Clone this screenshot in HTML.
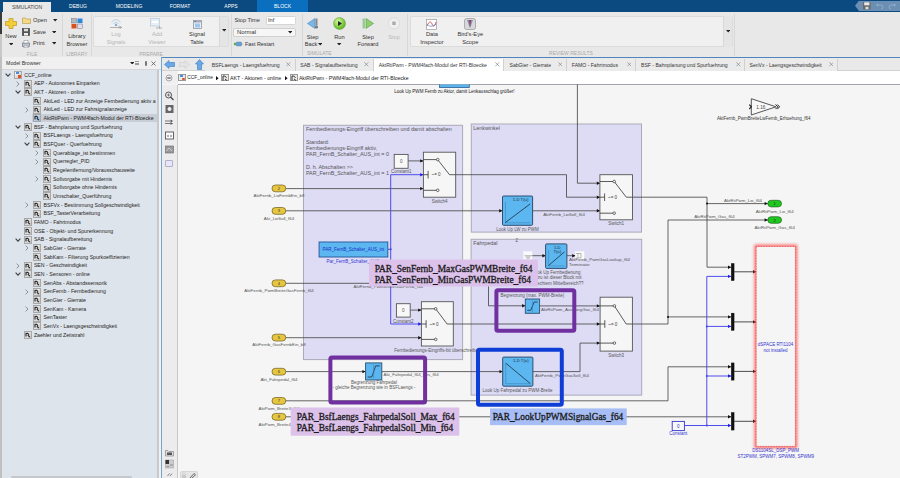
<!DOCTYPE html>
<html><head><meta charset="utf-8">
<style>
*{margin:0;padding:0;box-sizing:border-box}
html,body{width:900px;height:478px;overflow:hidden;background:#f5f5f5;font-family:"Liberation Sans",sans-serif;color:#222}
.a{position:absolute}
.t{position:absolute;white-space:nowrap;line-height:1}
.tr{position:absolute;font-size:5.2px;color:#1e1e1e;white-space:nowrap;line-height:1}
</style></head><body>
<div class="a" style="left:0px;top:0px;width:900.00px;height:12.00px;background:#0b4a80"></div>
<div class="a" style="left:3px;top:1.5px;width:48.00px;height:10.50px;background:#e9e9e9"></div>
<div class="t" style="left:-3.00px;top:4.50px;width:60px;text-align:center;font-size:5.0px;color:#444;">SIMULATION</div>
<div class="t" style="left:48.00px;top:4.05px;width:60px;text-align:center;font-size:5.0px;color:#fff;">DEBUG</div>
<div class="t" style="left:99.00px;top:4.05px;width:60px;text-align:center;font-size:5.0px;color:#fff;">MODELING</div>
<div class="t" style="left:150.00px;top:4.05px;width:60px;text-align:center;font-size:5.0px;color:#fff;">FORMAT</div>
<div class="t" style="left:201.00px;top:4.05px;width:60px;text-align:center;font-size:5.0px;color:#fff;">APPS</div>
<div class="a" style="left:257px;top:0px;width:51.00px;height:12.00px;background:#0a6fbf"></div>
<div class="t" style="left:252.50px;top:4.05px;width:60px;text-align:center;font-size:5.0px;color:#fff;">BLOCK</div>
<div class="a" style="left:855px;top:0.5px;width:45.00px;height:10.50px;background:#6b8fb3;clip-path:polygon(4px 0,100% 0,100% 100%,4px 100%,0 50%)"></div>
<svg class="a" style="left:863px;top:2px" width="8" height="8"><rect x="0" y="0" width="7.6" height="7.4" fill="#6a6a6a"/><rect x="1.2" y="0.3" width="5.2" height="3" fill="#e8e8e8"/><rect x="2.5" y="4.8" width="3" height="2.4" fill="#ddd"/></svg>
<svg class="a" style="left:876px;top:3px" width="8" height="6"><path d="M1.5 2 H5 A2 2 0 0 1 5 6" stroke="#98b2cc" stroke-width="0.8" fill="none"/><path d="M0 2 L2 0.5 V3.5Z" fill="#98b2cc"/></svg>
<svg class="a" style="left:888px;top:3px" width="8" height="6"><path d="M6.5 2 H3 A2 2 0 0 0 3 6" stroke="#98b2cc" stroke-width="0.8" fill="none"/><path d="M8 2 L6 0.5 V3.5Z" fill="#98b2cc"/></svg>
<div class="a" style="left:0px;top:12px;width:900.00px;height:45.00px;background:#e8e8e8"></div>
<div class="a" style="left:0px;top:12px;width:2.00px;height:22.00px;background:#3a3a3a"></div>
<div class="a" style="left:0px;top:34px;width:2.00px;height:23.00px;background:#c8c8c8"></div>
<svg class="a" style="left:5px;top:18px" width="12" height="11"><path d="M4 0.5 H8 V3.5 H11.5 V7.5 H8 V10.5 H4 V7.5 H0.5 V3.5 H4Z" fill="#f3cc3a" stroke="#c09a18" stroke-width="0.7"/></svg>
<div class="t" style="left:-19.00px;top:34.43px;width:60px;text-align:center;font-size:5.7px;color:#333;">New</div>
<svg class="a" style="left:9.1px;top:42.6px" width="4.4" height="2.6"><path d="M0 0 L4.4 0 L2.2 2.6Z" fill="#222"/></svg>
<svg class="a" style="left:22px;top:17px" width="9" height="7"><path d="M0.5 1 H3.5 L4.5 2 H8.5 V6.5 H0.5Z" fill="#f2d98a" stroke="#b49640" stroke-width="0.6"/></svg>
<svg class="a" style="left:22px;top:28px" width="8" height="8"><rect x="0.5" y="0.5" width="7" height="7" fill="#555" stroke="#333" stroke-width="0.6"/><rect x="2" y="0.8" width="4" height="2.5" fill="#ddd"/><rect x="2" y="5" width="4" height="2.5" fill="#eee"/></svg>
<svg class="a" style="left:22px;top:39.5px" width="8" height="8"><rect x="0.5" y="3" width="7" height="3.5" fill="#bcc6d0" stroke="#667" stroke-width="0.6"/><rect x="2" y="0.5" width="4" height="2.5" fill="#fff" stroke="#889" stroke-width="0.5"/><rect x="2" y="6" width="4" height="1.8" fill="#fff" stroke="#889" stroke-width="0.5"/></svg>
<div class="t" style="left:33.00px;top:18.33px;font-size:5.7px;color:#333;">Open</div>
<div class="t" style="left:33.00px;top:29.73px;font-size:5.7px;color:#333;">Save</div>
<div class="t" style="left:33.00px;top:41.33px;font-size:5.7px;color:#333;">Print</div>
<svg class="a" style="left:53.4px;top:19.2px" width="4.4" height="2.6"><path d="M0 0 L4.4 0 L2.2 2.6Z" fill="#222"/></svg>
<svg class="a" style="left:51.7px;top:30.6px" width="4.4" height="2.6"><path d="M0 0 L4.4 0 L2.2 2.6Z" fill="#222"/></svg>
<svg class="a" style="left:51.7px;top:42.2px" width="4.4" height="2.6"><path d="M0 0 L4.4 0 L2.2 2.6Z" fill="#222"/></svg>
<div class="t" style="left:2.00px;top:51.50px;width:60px;text-align:center;font-size:5.0px;color:#a8a8a8;">FILE</div>
<div class="a" style="left:62px;top:14px;width:1.00px;height:42.00px;background:#d8d8d8"></div>
<svg class="a" style="left:71px;top:18px" width="12" height="11"><rect x="0.5" y="0.5" width="5" height="4.5" fill="#b0b8c0" stroke="#778" stroke-width="0.5"/><rect x="6.5" y="0.5" width="5" height="4.5" fill="#2a8ad8"/><rect x="0.5" y="6" width="5" height="4.5" fill="#d85020"/><rect x="6.5" y="6" width="5" height="4.5" fill="#dde" stroke="#778" stroke-width="0.5"/></svg>
<div class="t" style="left:46.90px;top:34.43px;width:60px;text-align:center;font-size:5.7px;color:#333;">Library</div>
<div class="t" style="left:46.90px;top:41.73px;width:60px;text-align:center;font-size:5.7px;color:#333;">Browser</div>
<div class="t" style="left:46.90px;top:51.50px;width:60px;text-align:center;font-size:5.0px;color:#a8a8a8;">LIBRARY</div>
<div class="a" style="left:91px;top:14px;width:1.00px;height:42.00px;background:#d8d8d8"></div>
<div class="a" style="left:93px;top:15.8px;width:136.00px;height:31.30px;background:#f0f0f0;border:1px solid #dcdcdc;border-radius:2px"></div>
<div class="a" style="left:219.4px;top:16.5px;width:9.00px;height:29.90px;background:#e5e5e5;border-left:1px solid #d8d8d8"></div>
<svg class="a" style="left:221.6px;top:29.2px" width="4.4" height="2.6"><path d="M0 0 L4.4 0 L2.2 2.6Z" fill="#222"/></svg>
<svg class="a" style="left:109px;top:18px" width="14" height="11"><path d="M2.5 4.5 A5 5 0 0 1 11.5 4.5 M4.5 6 A2.8 2.8 0 0 1 9.5 6" stroke="#a6c6e6" stroke-width="0.8" fill="none"/><circle cx="7" cy="7" r="1.2" fill="#7aaedc"/><path d="M1 9.5 H13 M10 7.5 V10.5 M11 8 L12.5 9.5 L11 10.5" stroke="#999" stroke-width="0.7" fill="none"/></svg>
<div class="t" style="left:86.00px;top:32.43px;width:60px;text-align:center;font-size:5.7px;color:#b4b4b4;">Log</div>
<div class="t" style="left:86.00px;top:40.23px;width:60px;text-align:center;font-size:5.7px;color:#b4b4b4;">Signals</div>
<svg class="a" style="left:150px;top:18px" width="13" height="11"><rect x="0.5" y="0.5" width="9" height="7.5" fill="#e6eef6" stroke="#b8c8d8" stroke-width="0.7"/><rect x="2" y="3" width="6" height="2" fill="#fff"/><path d="M6 10 H12 M9.5 8 V10.5" stroke="#999" stroke-width="0.7"/></svg>
<div class="t" style="left:127.00px;top:32.43px;width:60px;text-align:center;font-size:5.7px;color:#b4b4b4;">Add</div>
<div class="t" style="left:127.00px;top:40.23px;width:60px;text-align:center;font-size:5.7px;color:#b4b4b4;">Viewer</div>
<svg class="a" style="left:193px;top:20px" width="9" height="9"><rect x="0.5" y="0.5" width="8" height="8" fill="#e8eef6" stroke="#8a8a8a" stroke-width="0.7"/><rect x="0.5" y="0.5" width="8" height="2" fill="#aab"/><rect x="1.5" y="1" width="1.2" height="1" fill="#2a6ad0"/><rect x="2" y="3.5" width="5" height="4" fill="#9cc8f0"/></svg>
<div class="t" style="left:167.00px;top:32.43px;width:60px;text-align:center;font-size:5.7px;color:#333;">Signal</div>
<div class="t" style="left:167.00px;top:40.23px;width:60px;text-align:center;font-size:5.7px;color:#333;">Table</div>
<div class="t" style="left:121.00px;top:51.50px;width:60px;text-align:center;font-size:5.0px;color:#a8a8a8;">PREPARE</div>
<div class="a" style="left:231px;top:14px;width:1.00px;height:42.00px;background:#d8d8d8"></div>
<div class="t" style="left:234.40px;top:18.33px;font-size:5.7px;color:#333;">Stop Time</div>
<div class="a" style="left:265.5px;top:15.5px;width:30.50px;height:9.00px;background:#fff;border:1px solid #d6d6d6;border-radius:1.5px"></div>
<div class="t" style="left:268.00px;top:18.03px;font-size:5.7px;color:#333;">Inf</div>
<div class="a" style="left:233px;top:27.5px;width:63.00px;height:9.50px;background:#f6f6f6;border:1px solid #d0d0d0;border-radius:2px"></div>
<div class="t" style="left:237.00px;top:30.06px;font-size:5.9px;color:#333;">Normal</div>
<svg class="a" style="left:288.1px;top:31.0px" width="4.4" height="2.6"><path d="M0 0 L4.4 0 L2.2 2.6Z" fill="#222"/></svg>
<svg class="a" style="left:234px;top:41px" width="10" height="6"><rect x="0" y="1.8" width="2.5" height="2.4" fill="#5a5"/><path d="M2.5 1 H7 A2.5 2.5 0 0 1 7 5 H2.5Z" fill="#6a9fd0" stroke="#4a7fb0" stroke-width="0.4"/></svg>
<div class="t" style="left:245.00px;top:41.95px;font-size:5.4px;color:#333;">Fast Restart</div>
<div class="a" style="left:302px;top:14px;width:1.00px;height:42.00px;background:#d8d8d8"></div>
<svg class="a" style="left:307px;top:18px" width="12" height="11"><path d="M8 0.5 V10.5 L0.5 5.5Z" fill="#7ab8e8" stroke="#4a88c0" stroke-width="0.6"/><rect x="8.5" y="0.5" width="2" height="7" fill="#888"/><circle cx="9.5" cy="9" r="1.6" fill="#777"/></svg>
<div class="t" style="left:282.70px;top:34.53px;width:60px;text-align:center;font-size:5.7px;color:#333;">Step</div>
<div class="t" style="left:281.00px;top:42.13px;width:60px;text-align:center;font-size:5.7px;color:#333;">Back</div>
<svg class="a" style="left:317.8px;top:43.0px" width="4.4" height="2.6"><path d="M0 0 L4.4 0 L2.2 2.6Z" fill="#222"/></svg>
<svg class="a" style="left:333px;top:17px" width="13" height="13"><defs><radialGradient id="rg" cx="40%" cy="35%" r="65%"><stop offset="0" stop-color="#d6ff9a"/><stop offset="1" stop-color="#58b020"/></radialGradient></defs><circle cx="6.5" cy="6.5" r="6" fill="url(#rg)" stroke="#6aa040" stroke-width="0.5"/><path d="M5 4 L9 6.5 L5 9Z" fill="#222"/></svg>
<div class="t" style="left:309.40px;top:34.53px;width:60px;text-align:center;font-size:5.7px;color:#333;">Run</div>
<svg class="a" style="left:337.2px;top:42.8px" width="4.4" height="2.6"><path d="M0 0 L4.4 0 L2.2 2.6Z" fill="#222"/></svg>
<svg class="a" style="left:362px;top:18px" width="12" height="11"><rect x="0.5" y="0.5" width="2.5" height="10" fill="#9c9"/><path d="M4 0.5 V10.5 L11.5 5.5Z" fill="#8ed070" stroke="#5a9a40" stroke-width="0.6"/></svg>
<div class="t" style="left:338.00px;top:34.53px;width:60px;text-align:center;font-size:5.7px;color:#333;">Step</div>
<div class="t" style="left:338.00px;top:42.13px;width:60px;text-align:center;font-size:5.7px;color:#333;">Forward</div>
<svg class="a" style="left:388px;top:17px" width="13" height="13"><circle cx="6" cy="6.3" r="5.6" fill="#efefef" stroke="#d4d4d4" stroke-width="0.7"/><rect x="4.3" y="4.6" width="3.4" height="3.4" fill="#aaa"/></svg>
<div class="t" style="left:364.00px;top:34.53px;width:60px;text-align:center;font-size:5.7px;color:#b8b8b8;">Stop</div>
<div class="t" style="left:289.30px;top:51.40px;width:60px;text-align:center;font-size:5.0px;color:#a8a8a8;">SIMULATE</div>
<div class="a" style="left:407px;top:14px;width:1.00px;height:42.00px;background:#d8d8d8"></div>
<div class="a" style="left:409.6px;top:15.7px;width:323.40px;height:31.60px;background:#f0f0f0;border:1px solid #dcdcdc;border-radius:2px"></div>
<div class="a" style="left:723px;top:16.4px;width:9.30px;height:30.20px;background:#e5e5e5;border-left:1px solid #d8d8d8"></div>
<svg class="a" style="left:725.5px;top:30.2px" width="4.4" height="2.6"><path d="M0 0 L4.4 0 L2.2 2.6Z" fill="#222"/></svg>
<svg class="a" style="left:426px;top:19px" width="11" height="11"><rect x="0.5" y="0.5" width="10" height="10" fill="#fff" stroke="#9a9a9a" stroke-width="0.7"/><path d="M1 7 C3 2, 5 2, 6 5 S 9 8, 10 3" stroke="#d04040" stroke-width="0.8" fill="none"/><path d="M1 5 C3 8, 6 8, 10 5" stroke="#4a80d0" stroke-width="0.7" fill="none"/></svg>
<div class="t" style="left:401.90px;top:32.23px;width:60px;text-align:center;font-size:5.7px;color:#333;">Data</div>
<div class="t" style="left:401.90px;top:40.13px;width:60px;text-align:center;font-size:5.7px;color:#333;">Inspector</div>
<svg class="a" style="left:464px;top:18px" width="12" height="12"><rect x="0.5" y="0.5" width="11" height="11" rx="2" fill="#d8d8d8" stroke="#888" stroke-width="0.6"/><path d="M3 2 L6 10 L9 2" fill="#5aa0e0"/><path d="M4.8 2 L6 10 L7.2 2Z" fill="#d83030"/></svg>
<div class="t" style="left:440.30px;top:32.23px;width:60px;text-align:center;font-size:5.7px;color:#333;">Bird's-Eye</div>
<div class="t" style="left:440.30px;top:40.13px;width:60px;text-align:center;font-size:5.7px;color:#333;">Scope</div>
<div class="t" style="left:531.00px;top:51.40px;width:80px;text-align:center;font-size:5.0px;color:#a8a8a8;">REVIEW RESULTS</div>
<div class="a" style="left:734px;top:14px;width:1.00px;height:42.00px;background:#d8d8d8"></div>
<div class="a" style="left:0px;top:57px;width:161.00px;height:421.00px;background:#dee4eb"></div>
<div class="a" style="left:0px;top:57px;width:161.00px;height:13.00px;background:#f0f0f0;border-bottom:1px solid #d6d6d6"></div>
<div class="a" style="left:0px;top:57px;width:2.00px;height:421.00px;background:#c0c0c0"></div>
<div class="t" style="left:6.10px;top:61.22px;font-size:5.2px;color:#333;">Model Browser</div>
<svg class="a" style="left:129.6px;top:61.7px" width="4.4" height="2.6"><path d="M0 0 L4.4 0 L2.2 2.6Z" fill="#222"/></svg>
<div class="a" style="left:134.5px;top:61.3px;width:4.50px;height:3.70px;border-top:1px solid #999;border-bottom:1px solid #999"></div>
<div class="a" style="left:134.5px;top:63px;width:4.50px;height:1.00px;background:#999"></div>
<div class="a" style="left:145.3px;top:60.5px;width:1.70px;height:5.00px;background:#777;border-radius:1px"></div>
<svg class="a" style="left:151px;top:60.5px" width="5" height="5"><path d="M0.5 0.5 L4.5 4.5 M4.5 0.5 L0.5 4.5" stroke="#555" stroke-width="0.8"/></svg>
<div class="a" style="left:157px;top:70px;width:1.50px;height:408.00px;background:#c6cacf"></div>
<div class="a" style="left:158.5px;top:70px;width:2.50px;height:408.00px;background:#f0f2f4"></div>
<div class="a" style="left:10.8px;top:475.5px;width:120.80px;height:2.50px;background:#c4c8cc;border-radius:1px"></div>
<div style="position:absolute;left:0;top:0;width:157px;height:478px;overflow:hidden">
<svg class="a" style="left:5.0px;top:72.8px" width="6" height="4"><path d="M0.6 0.6 L3 3.2 L5.4 0.6" stroke="#444" stroke-width="1.1" fill="none"/></svg>
<div class="a" style="left:14.0px;top:70.8px;width:8px;height:8px;border:0.8px solid #a8a8a8;background:linear-gradient(135deg,#fafafa,#c4c4c4)"></div>
<div class="a" style="left:15.5px;top:72.3px;width:3px;height:2px;background:#4a90d8"></div>
<div class="a" style="left:18.0px;top:74.8px;width:3px;height:3px;background:#e05020"></div>
<div class="tr" style="left:24.3px;top:72.6px">CCF_online</div>
<svg class="a" style="left:15.6px;top:80.5px" width="4" height="6"><path d="M0.6 0.6 L3 3 L0.6 5.4" stroke="#888" stroke-width="0.9" fill="none"/></svg>
<div class="a" style="left:23.6px;top:79.5px;width:8px;height:8px;border:0.8px solid #a8a8a8;background:linear-gradient(135deg,#fafafa,#c4c4c4)"></div>
<svg class="a" style="left:23.6px;top:79.5px" width="8" height="8"><path d="M2 5.5 V2.3 H3.6 L5 3.7 M3.8 4.2 L5.8 6.2" stroke="#1a1a1a" stroke-width="1.1" fill="none"/></svg>
<div class="tr" style="left:33.9px;top:81.3px">AEP - Autonomes Einparken</div>
<svg class="a" style="left:14.6px;top:90.1px" width="6" height="4"><path d="M0.6 0.6 L3 3.2 L5.4 0.6" stroke="#444" stroke-width="1.1" fill="none"/></svg>
<div class="a" style="left:23.6px;top:88.1px;width:8px;height:8px;border:0.8px solid #a8a8a8;background:linear-gradient(135deg,#fafafa,#c4c4c4)"></div>
<svg class="a" style="left:23.6px;top:88.1px" width="8" height="8"><path d="M2 5.5 V2.3 H3.6 L5 3.7 M3.8 4.2 L5.8 6.2" stroke="#1a1a1a" stroke-width="1.1" fill="none"/></svg>
<div class="tr" style="left:33.9px;top:89.9px">AKT - Aktoren - online</div>
<div class="a" style="left:33.2px;top:96.8px;width:8px;height:8px;border:0.8px solid #a8a8a8;background:linear-gradient(135deg,#fafafa,#c4c4c4)"></div>
<svg class="a" style="left:33.2px;top:96.8px" width="8" height="8"><path d="M2 5.5 V2.3 H3.6 L5 3.7 M3.8 4.2 L5.8 6.2" stroke="#1a1a1a" stroke-width="1.1" fill="none"/></svg>
<div class="tr" style="left:43.5px;top:98.6px">AktLed - LED zur Anzeige Fernbedienung aktiv a</div>
<svg class="a" style="left:25.2px;top:106.5px" width="4" height="6"><path d="M0.6 0.6 L3 3 L0.6 5.4" stroke="#888" stroke-width="0.9" fill="none"/></svg>
<div class="a" style="left:33.2px;top:105.5px;width:8px;height:8px;border:0.8px solid #a8a8a8;background:linear-gradient(135deg,#fafafa,#c4c4c4)"></div>
<svg class="a" style="left:33.2px;top:105.5px" width="8" height="8"><path d="M2 5.5 V2.3 H3.6 L5 3.7 M3.8 4.2 L5.8 6.2" stroke="#1a1a1a" stroke-width="1.1" fill="none"/></svg>
<div class="tr" style="left:43.5px;top:107.3px">AktLed - LED zur Fahrsignalanzeige</div>
<div class="a" style="left:31.7px;top:113.6px;width:126px;height:8.8px;background:#c9ced6"></div>
<div class="a" style="left:33.2px;top:114.2px;width:8px;height:8px;border:0.8px solid #a8a8a8;background:linear-gradient(135deg,#d8e8f8,#90b8e0)"></div>
<svg class="a" style="left:33.2px;top:114.2px" width="8" height="8"><path d="M2 5.5 V2.3 H3.6 L5 3.7 M3.8 4.2 L5.8 6.2" stroke="#1a1a1a" stroke-width="1.1" fill="none"/></svg>
<div class="tr" style="left:43.5px;top:116.0px">AktRtiPwm - PWM4fach-Modul der RTI-Bloecke</div>
<svg class="a" style="left:14.6px;top:124.8px" width="6" height="4"><path d="M0.6 0.6 L3 3.2 L5.4 0.6" stroke="#444" stroke-width="1.1" fill="none"/></svg>
<div class="a" style="left:23.6px;top:122.8px;width:8px;height:8px;border:0.8px solid #a8a8a8;background:linear-gradient(135deg,#fafafa,#c4c4c4)"></div>
<svg class="a" style="left:23.6px;top:122.8px" width="8" height="8"><path d="M2 5.5 V2.3 H3.6 L5 3.7 M3.8 4.2 L5.8 6.2" stroke="#1a1a1a" stroke-width="1.1" fill="none"/></svg>
<div class="tr" style="left:33.9px;top:124.6px">BSF - Bahnplanung und Spurfuehrung</div>
<svg class="a" style="left:25.2px;top:132.5px" width="4" height="6"><path d="M0.6 0.6 L3 3 L0.6 5.4" stroke="#888" stroke-width="0.9" fill="none"/></svg>
<div class="a" style="left:33.2px;top:131.5px;width:8px;height:8px;border:0.8px solid #a8a8a8;background:linear-gradient(135deg,#fafafa,#c4c4c4)"></div>
<svg class="a" style="left:33.2px;top:131.5px" width="8" height="8"><path d="M2 5.5 V2.3 H3.6 L5 3.7 M3.8 4.2 L5.8 6.2" stroke="#1a1a1a" stroke-width="1.1" fill="none"/></svg>
<div class="tr" style="left:43.5px;top:133.3px">BSFLaengs - Laengsfuehrung</div>
<svg class="a" style="left:24.2px;top:142.2px" width="6" height="4"><path d="M0.6 0.6 L3 3.2 L5.4 0.6" stroke="#444" stroke-width="1.1" fill="none"/></svg>
<div class="a" style="left:33.2px;top:140.2px;width:8px;height:8px;border:0.8px solid #a8a8a8;background:linear-gradient(135deg,#fafafa,#c4c4c4)"></div>
<svg class="a" style="left:33.2px;top:140.2px" width="8" height="8"><path d="M2 5.5 V2.3 H3.6 L5 3.7 M3.8 4.2 L5.8 6.2" stroke="#1a1a1a" stroke-width="1.1" fill="none"/></svg>
<div class="tr" style="left:43.5px;top:142.0px">BSFQuer - Querfuehrung</div>
<svg class="a" style="left:34.8px;top:149.8px" width="4" height="6"><path d="M0.6 0.6 L3 3 L0.6 5.4" stroke="#888" stroke-width="0.9" fill="none"/></svg>
<div class="a" style="left:42.8px;top:148.8px;width:8px;height:8px;border:0.8px solid #a8a8a8;background:linear-gradient(135deg,#fafafa,#c4c4c4)"></div>
<svg class="a" style="left:42.8px;top:148.8px" width="8" height="8"><path d="M2 5.5 V2.3 H3.6 L5 3.7 M3.8 4.2 L5.8 6.2" stroke="#1a1a1a" stroke-width="1.1" fill="none"/></svg>
<div class="tr" style="left:53.1px;top:150.6px">Querablage_ist bestimmen</div>
<svg class="a" style="left:34.8px;top:158.5px" width="4" height="6"><path d="M0.6 0.6 L3 3 L0.6 5.4" stroke="#888" stroke-width="0.9" fill="none"/></svg>
<div class="a" style="left:42.8px;top:157.5px;width:8px;height:8px;border:0.8px solid #a8a8a8;background:linear-gradient(135deg,#fafafa,#c4c4c4)"></div>
<svg class="a" style="left:42.8px;top:157.5px" width="8" height="8"><path d="M2 5.5 V2.3 H3.6 L5 3.7 M3.8 4.2 L5.8 6.2" stroke="#1a1a1a" stroke-width="1.1" fill="none"/></svg>
<div class="tr" style="left:53.1px;top:159.3px">Querregler_PID</div>
<div class="a" style="left:42.8px;top:166.2px;width:8px;height:8px;border:0.8px solid #a8a8a8;background:linear-gradient(135deg,#fafafa,#c4c4c4)"></div>
<svg class="a" style="left:42.8px;top:166.2px" width="8" height="8"><path d="M2 5.5 V2.3 H3.6 L5 3.7 M3.8 4.2 L5.8 6.2" stroke="#1a1a1a" stroke-width="1.1" fill="none"/></svg>
<div class="tr" style="left:53.1px;top:168.0px">Regelentfernung/Vorausschauweite</div>
<svg class="a" style="left:34.8px;top:175.8px" width="4" height="6"><path d="M0.6 0.6 L3 3 L0.6 5.4" stroke="#888" stroke-width="0.9" fill="none"/></svg>
<div class="a" style="left:42.8px;top:174.8px;width:8px;height:8px;border:0.8px solid #a8a8a8;background:linear-gradient(135deg,#fafafa,#c4c4c4)"></div>
<svg class="a" style="left:42.8px;top:174.8px" width="8" height="8"><path d="M2 5.5 V2.3 H3.6 L5 3.7 M3.8 4.2 L5.8 6.2" stroke="#1a1a1a" stroke-width="1.1" fill="none"/></svg>
<div class="tr" style="left:53.1px;top:176.6px">Sollvorgabe mit Hindernis</div>
<div class="a" style="left:42.8px;top:183.5px;width:8px;height:8px;border:0.8px solid #a8a8a8;background:linear-gradient(135deg,#fafafa,#c4c4c4)"></div>
<svg class="a" style="left:42.8px;top:183.5px" width="8" height="8"><path d="M2 5.5 V2.3 H3.6 L5 3.7 M3.8 4.2 L5.8 6.2" stroke="#1a1a1a" stroke-width="1.1" fill="none"/></svg>
<div class="tr" style="left:53.1px;top:185.3px">Sollvorgabe ohne Hindernis</div>
<div class="a" style="left:42.8px;top:192.2px;width:8px;height:8px;border:0.8px solid #a8a8a8;background:linear-gradient(135deg,#fafafa,#c4c4c4)"></div>
<svg class="a" style="left:42.8px;top:192.2px" width="8" height="8"><path d="M2 5.5 V2.3 H3.6 L5 3.7 M3.8 4.2 L5.8 6.2" stroke="#1a1a1a" stroke-width="1.1" fill="none"/></svg>
<div class="tr" style="left:53.1px;top:194.0px">Umschalter_Querführung</div>
<svg class="a" style="left:25.2px;top:201.9px" width="4" height="6"><path d="M0.6 0.6 L3 3 L0.6 5.4" stroke="#888" stroke-width="0.9" fill="none"/></svg>
<div class="a" style="left:33.2px;top:200.9px;width:8px;height:8px;border:0.8px solid #a8a8a8;background:linear-gradient(135deg,#fafafa,#c4c4c4)"></div>
<svg class="a" style="left:33.2px;top:200.9px" width="8" height="8"><path d="M2 5.5 V2.3 H3.6 L5 3.7 M3.8 4.2 L5.8 6.2" stroke="#1a1a1a" stroke-width="1.1" fill="none"/></svg>
<div class="tr" style="left:43.5px;top:202.7px">BSFVx - Bestimmung Sollgeschwindigkeit</div>
<div class="a" style="left:33.2px;top:209.5px;width:8px;height:8px;border:0.8px solid #a8a8a8;background:linear-gradient(135deg,#fafafa,#c4c4c4)"></div>
<svg class="a" style="left:33.2px;top:209.5px" width="8" height="8"><path d="M2 5.5 V2.3 H3.6 L5 3.7 M3.8 4.2 L5.8 6.2" stroke="#1a1a1a" stroke-width="1.1" fill="none"/></svg>
<div class="tr" style="left:43.5px;top:211.3px">BSF_TasterVerarbeitung</div>
<div class="a" style="left:23.6px;top:218.2px;width:8px;height:8px;border:0.8px solid #a8a8a8;background:linear-gradient(135deg,#fafafa,#c4c4c4)"></div>
<svg class="a" style="left:23.6px;top:218.2px" width="8" height="8"><path d="M2 5.5 V2.3 H3.6 L5 3.7 M3.8 4.2 L5.8 6.2" stroke="#1a1a1a" stroke-width="1.1" fill="none"/></svg>
<div class="tr" style="left:33.9px;top:220.0px">FAMO  - Fahrtmodus</div>
<div class="a" style="left:23.6px;top:226.9px;width:8px;height:8px;border:0.8px solid #a8a8a8;background:linear-gradient(135deg,#fafafa,#c4c4c4)"></div>
<svg class="a" style="left:23.6px;top:226.9px" width="8" height="8"><path d="M2 5.5 V2.3 H3.6 L5 3.7 M3.8 4.2 L5.8 6.2" stroke="#1a1a1a" stroke-width="1.1" fill="none"/></svg>
<div class="tr" style="left:33.9px;top:228.7px">OSE - Objekt- und Spurerkennung</div>
<svg class="a" style="left:14.6px;top:237.5px" width="6" height="4"><path d="M0.6 0.6 L3 3.2 L5.4 0.6" stroke="#444" stroke-width="1.1" fill="none"/></svg>
<div class="a" style="left:23.6px;top:235.5px;width:8px;height:8px;border:0.8px solid #a8a8a8;background:linear-gradient(135deg,#fafafa,#c4c4c4)"></div>
<svg class="a" style="left:23.6px;top:235.5px" width="8" height="8"><path d="M2 5.5 V2.3 H3.6 L5 3.7 M3.8 4.2 L5.8 6.2" stroke="#1a1a1a" stroke-width="1.1" fill="none"/></svg>
<div class="tr" style="left:33.9px;top:237.3px">SAB - Signalaufbereitung</div>
<svg class="a" style="left:25.2px;top:245.2px" width="4" height="6"><path d="M0.6 0.6 L3 3 L0.6 5.4" stroke="#888" stroke-width="0.9" fill="none"/></svg>
<div class="a" style="left:33.2px;top:244.2px;width:8px;height:8px;border:0.8px solid #a8a8a8;background:linear-gradient(135deg,#fafafa,#c4c4c4)"></div>
<svg class="a" style="left:33.2px;top:244.2px" width="8" height="8"><path d="M2 5.5 V2.3 H3.6 L5 3.7 M3.8 4.2 L5.8 6.2" stroke="#1a1a1a" stroke-width="1.1" fill="none"/></svg>
<div class="tr" style="left:43.5px;top:246.0px">SabGier - Gierrate</div>
<div class="a" style="left:33.2px;top:252.9px;width:8px;height:8px;border:0.8px solid #a8a8a8;background:linear-gradient(135deg,#fafafa,#c4c4c4)"></div>
<svg class="a" style="left:33.2px;top:252.9px" width="8" height="8"><path d="M2 5.5 V2.3 H3.6 L5 3.7 M3.8 4.2 L5.8 6.2" stroke="#1a1a1a" stroke-width="1.1" fill="none"/></svg>
<div class="tr" style="left:43.5px;top:254.7px">SabKam - Filterung Spurkoeffizienten</div>
<svg class="a" style="left:15.6px;top:262.5px" width="4" height="6"><path d="M0.6 0.6 L3 3 L0.6 5.4" stroke="#888" stroke-width="0.9" fill="none"/></svg>
<div class="a" style="left:23.6px;top:261.5px;width:8px;height:8px;border:0.8px solid #a8a8a8;background:linear-gradient(135deg,#fafafa,#c4c4c4)"></div>
<svg class="a" style="left:23.6px;top:261.5px" width="8" height="8"><path d="M2 5.5 V2.3 H3.6 L5 3.7 M3.8 4.2 L5.8 6.2" stroke="#1a1a1a" stroke-width="1.1" fill="none"/></svg>
<div class="tr" style="left:33.9px;top:263.3px">SEN - Geschwindigkeit</div>
<svg class="a" style="left:14.6px;top:272.2px" width="6" height="4"><path d="M0.6 0.6 L3 3.2 L5.4 0.6" stroke="#444" stroke-width="1.1" fill="none"/></svg>
<div class="a" style="left:23.6px;top:270.2px;width:8px;height:8px;border:0.8px solid #a8a8a8;background:linear-gradient(135deg,#fafafa,#c4c4c4)"></div>
<svg class="a" style="left:23.6px;top:270.2px" width="8" height="8"><path d="M2 5.5 V2.3 H3.6 L5 3.7 M3.8 4.2 L5.8 6.2" stroke="#1a1a1a" stroke-width="1.1" fill="none"/></svg>
<div class="tr" style="left:33.9px;top:272.0px">SEN - Sensoren - online</div>
<div class="a" style="left:33.2px;top:278.9px;width:8px;height:8px;border:0.8px solid #a8a8a8;background:linear-gradient(135deg,#fafafa,#c4c4c4)"></div>
<svg class="a" style="left:33.2px;top:278.9px" width="8" height="8"><path d="M2 5.5 V2.3 H3.6 L5 3.7 M3.8 4.2 L5.8 6.2" stroke="#1a1a1a" stroke-width="1.1" fill="none"/></svg>
<div class="tr" style="left:43.5px;top:280.7px">SenAbs - Abstandssensorik</div>
<svg class="a" style="left:25.2px;top:288.6px" width="4" height="6"><path d="M0.6 0.6 L3 3 L0.6 5.4" stroke="#888" stroke-width="0.9" fill="none"/></svg>
<div class="a" style="left:33.2px;top:287.6px;width:8px;height:8px;border:0.8px solid #a8a8a8;background:linear-gradient(135deg,#fafafa,#c4c4c4)"></div>
<svg class="a" style="left:33.2px;top:287.6px" width="8" height="8"><path d="M2 5.5 V2.3 H3.6 L5 3.7 M3.8 4.2 L5.8 6.2" stroke="#1a1a1a" stroke-width="1.1" fill="none"/></svg>
<div class="tr" style="left:43.5px;top:289.4px">SenFernb - Fernbedienung</div>
<div class="a" style="left:33.2px;top:296.2px;width:8px;height:8px;border:0.8px solid #a8a8a8;background:linear-gradient(135deg,#fafafa,#c4c4c4)"></div>
<svg class="a" style="left:33.2px;top:296.2px" width="8" height="8"><path d="M2 5.5 V2.3 H3.6 L5 3.7 M3.8 4.2 L5.8 6.2" stroke="#1a1a1a" stroke-width="1.1" fill="none"/></svg>
<div class="tr" style="left:43.5px;top:298.0px">SenGier - Gierrate</div>
<svg class="a" style="left:25.2px;top:305.9px" width="4" height="6"><path d="M0.6 0.6 L3 3 L0.6 5.4" stroke="#888" stroke-width="0.9" fill="none"/></svg>
<div class="a" style="left:33.2px;top:304.9px;width:8px;height:8px;border:0.8px solid #a8a8a8;background:linear-gradient(135deg,#fafafa,#c4c4c4)"></div>
<svg class="a" style="left:33.2px;top:304.9px" width="8" height="8"><path d="M2 5.5 V2.3 H3.6 L5 3.7 M3.8 4.2 L5.8 6.2" stroke="#1a1a1a" stroke-width="1.1" fill="none"/></svg>
<div class="tr" style="left:43.5px;top:306.7px">SenKam - Kamera</div>
<div class="a" style="left:33.2px;top:313.6px;width:8px;height:8px;border:0.8px solid #a8a8a8;background:linear-gradient(135deg,#fafafa,#c4c4c4)"></div>
<svg class="a" style="left:33.2px;top:313.6px" width="8" height="8"><path d="M2 5.5 V2.3 H3.6 L5 3.7 M3.8 4.2 L5.8 6.2" stroke="#1a1a1a" stroke-width="1.1" fill="none"/></svg>
<div class="tr" style="left:43.5px;top:315.4px">SenTaster</div>
<div class="a" style="left:33.2px;top:322.2px;width:8px;height:8px;border:0.8px solid #a8a8a8;background:linear-gradient(135deg,#fafafa,#c4c4c4)"></div>
<svg class="a" style="left:33.2px;top:322.2px" width="8" height="8"><path d="M2 5.5 V2.3 H3.6 L5 3.7 M3.8 4.2 L5.8 6.2" stroke="#1a1a1a" stroke-width="1.1" fill="none"/></svg>
<div class="tr" style="left:43.5px;top:324.0px">SenVx - Laengsgeschwindigkeit</div>
<div class="a" style="left:23.6px;top:330.9px;width:8px;height:8px;border:0.8px solid #a8a8a8;background:linear-gradient(135deg,#fafafa,#c4c4c4)"></div>
<svg class="a" style="left:23.6px;top:330.9px" width="8" height="8"><path d="M2 5.5 V2.3 H3.6 L5 3.7 M3.8 4.2 L5.8 6.2" stroke="#1a1a1a" stroke-width="1.1" fill="none"/></svg>
<div class="tr" style="left:33.9px;top:332.7px">Zaehler und Zeitstrahl</div>
</div>
<div class="a" style="left:161px;top:57px;width:739.00px;height:421.00px;background:#f5f5f5"></div>
<div class="a" style="left:161px;top:57px;width:739.00px;height:1.00px;background:#4f86c0"></div>
<div class="a" style="left:160.6px;top:57px;width:1.80px;height:421.00px;background:#74a3d0"></div>
<div class="a" style="left:162px;top:58px;width:738.00px;height:12.50px;background:#e9e9e9;border-bottom:1px solid #d2d2d2"></div>
<svg class="a" style="left:164px;top:59.5px" width="11" height="9"><path d="M0.5 4.5 L5 0.5 V2.5 H10.5 V6.5 H5 V8.5Z" fill="#6aa8e8" stroke="#3a78c0" stroke-width="0.6"/></svg>
<svg class="a" style="left:179px;top:59.5px" width="11" height="9"><path d="M10.5 4.5 L6 0.5 V2.5 H0.5 V6.5 H6 V8.5Z" fill="#e4e4e4" stroke="#cfcfcf" stroke-width="0.6"/></svg>
<svg class="a" style="left:194.5px;top:58.5px" width="9" height="11"><path d="M4.5 0.5 L8.5 5 H6.5 V10.5 H2.5 V5 H0.5Z" fill="#6aa8e8" stroke="#3a78c0" stroke-width="0.6"/></svg>
<div class="a" style="left:204.5px;top:58.5px;width:91.30px;height:12.00px;background:#ebebeb;border-right:1px solid #d0d0d0"></div>
<div class="t" style="left:211.70px;top:63.16px;font-size:5.1px;color:#333;">BSFLaengs - Laengsfuehrung</div>
<svg class="a" style="left:286.2px;top:62.3px" width="4.6" height="4.6"><path d="M0.3 0.3 L4.3 4.3 M4.3 0.3 L0.3 4.3" stroke="#8a8a8a" stroke-width="0.7"/></svg>
<div class="a" style="left:295.8px;top:58.5px;width:77.80px;height:12.00px;background:#ebebeb;border-right:1px solid #d0d0d0"></div>
<div class="t" style="left:300.30px;top:63.16px;font-size:5.1px;color:#333;">SAB - Signalaufbereitung</div>
<svg class="a" style="left:364.4px;top:62.3px" width="4.6" height="4.6"><path d="M0.3 0.3 L4.3 4.3 M4.3 0.3 L0.3 4.3" stroke="#8a8a8a" stroke-width="0.7"/></svg>
<div class="a" style="left:373.6px;top:58.5px;width:130.00px;height:12.50px;background:#ffffff;border-right:1px solid #d0d0d0"></div>
<div class="t" style="left:378.80px;top:63.16px;font-size:5.1px;color:#333;">AktRtiPwm - PWM4fach-Modul der RTI-Bloecke</div>
<svg class="a" style="left:495.0px;top:62.3px" width="4.6" height="4.6"><path d="M0.3 0.3 L4.3 4.3 M4.3 0.3 L0.3 4.3" stroke="#8a8a8a" stroke-width="0.7"/></svg>
<div class="a" style="left:503.6px;top:58.5px;width:63.10px;height:12.00px;background:#ebebeb;border-right:1px solid #d0d0d0"></div>
<div class="t" style="left:509.50px;top:63.16px;font-size:5.1px;color:#333;">SabGier - Gierrate</div>
<svg class="a" style="left:557.7px;top:62.3px" width="4.6" height="4.6"><path d="M0.3 0.3 L4.3 4.3 M4.3 0.3 L0.3 4.3" stroke="#8a8a8a" stroke-width="0.7"/></svg>
<div class="a" style="left:566.7px;top:58.5px;width:69.10px;height:12.00px;background:#ebebeb;border-right:1px solid #d0d0d0"></div>
<div class="t" style="left:571.80px;top:63.16px;font-size:5.1px;color:#333;">FAMO  - Fahrtmodus</div>
<svg class="a" style="left:626.9px;top:62.3px" width="4.6" height="4.6"><path d="M0.3 0.3 L4.3 4.3 M4.3 0.3 L0.3 4.3" stroke="#8a8a8a" stroke-width="0.7"/></svg>
<div class="a" style="left:635.8px;top:58.5px;width:109.20px;height:12.00px;background:#ebebeb;border-right:1px solid #d0d0d0"></div>
<div class="t" style="left:641.00px;top:63.16px;font-size:5.1px;color:#333;">BSF - Bahnplanung und Spurfuehrung</div>
<svg class="a" style="left:736.0px;top:62.3px" width="4.6" height="4.6"><path d="M0.3 0.3 L4.3 4.3 M4.3 0.3 L0.3 4.3" stroke="#8a8a8a" stroke-width="0.7"/></svg>
<div class="a" style="left:745px;top:58.5px;width:92.80px;height:12.00px;background:#ebebeb;border-right:1px solid #d0d0d0"></div>
<div class="t" style="left:749.50px;top:63.16px;font-size:5.1px;color:#333;">SenVx - Laengsgeschwindigkeit</div>
<svg class="a" style="left:828.9px;top:62.3px" width="4.6" height="4.6"><path d="M0.3 0.3 L4.3 4.3 M4.3 0.3 L0.3 4.3" stroke="#8a8a8a" stroke-width="0.7"/></svg>
<div class="a" style="left:162px;top:70.5px;width:15.50px;height:13.50px;background:#efefef"></div>
<div class="a" style="left:177.5px;top:70.5px;width:722.50px;height:14.00px;background:#fff;border-bottom:1px solid #a0a4aa"></div>
<svg class="a" style="left:165px;top:73.5px" width="8" height="8"><circle cx="4" cy="4" r="3" fill="#eee" stroke="#888" stroke-width="0.7"/><rect x="2.3" y="3.4" width="3.4" height="1.2" fill="#555"/></svg>
<div class="a" style="left:164px;top:86.5px;width:11.00px;height:0.50px;background:#ccc"></div>
<div class="a" style="left:178.2px;top:73.8px;width:7.6px;height:7.6px;border:1px solid #999;background:#eaeaea"></div>
<div class="a" style="left:179.7px;top:75.2px;width:3px;height:2px;background:#4a90d8"></div><div class="a" style="left:182.2px;top:77.5px;width:2.6px;height:2.6px;background:#e05020;border-radius:50%"></div>
<div class="t" style="left:187.3px;top:75.95px;font-size:4.85px;color:#222">CCF_online</div>
<svg class="a" style="left:215.5px;top:75.6px" width="3" height="4.4"><path d="M0 0 L2.6 2.2 L0 4.4Z" fill="#111"/></svg>
<div class="a" style="left:221.2px;top:73.8px;width:7.6px;height:7.6px;border:1px solid #999;background:#eaeaea"></div>
<svg class="a" style="left:221.2px;top:73.8px" width="8" height="8"><path d="M2 6.5 V2 H3.8 L5.5 3.8 M4 5 L6 6.5" stroke="#333" stroke-width="1" fill="none"/></svg>
<div class="t" style="left:229.9px;top:75.81px;font-size:5.26px;color:#222">AKT - Aktoren - online</div>
<svg class="a" style="left:284.6px;top:75.6px" width="3" height="4.4"><path d="M0 0 L2.6 2.2 L0 4.4Z" fill="#111"/></svg>
<div class="a" style="left:290.2px;top:73.8px;width:7.6px;height:7.6px;border:1px solid #999;background:#eaeaea"></div>
<svg class="a" style="left:290.2px;top:73.8px" width="8" height="8"><path d="M2 6.5 V2 H3.8 L5.5 3.8 M4 5 L6 6.5" stroke="#333" stroke-width="1" fill="none"/></svg>
<div class="t" style="left:298.9px;top:75.84px;font-size:5.18px;color:#222">AktRtiPwm - PWM4fach-Modul der RTI-Bloecke</div>
<div class="a" style="left:162px;top:84.5px;width:14.50px;height:393.50px;background:#ececec"></div>
<div class="a" style="left:176.5px;top:84.5px;width:1.50px;height:393.50px;background:#c8c8c8"></div>
<svg class="a" style="left:164px;top:90px" width="11" height="70"><circle cx="4.5" cy="5" r="3" fill="none" stroke="#444" stroke-width="0.9"/><path d="M6.5 7 L9.5 10" stroke="#444" stroke-width="1.2"/><path d="M3 5 H6 M4.5 3.5 V6.5" stroke="#444" stroke-width="0.6"/><rect x="1.5" y="15" width="8" height="8" fill="#666"/><path d="M3.5 19 H7.5 M5.5 17 V21" stroke="#eee" stroke-width="1.6"/><rect x="4" y="17.5" width="3" height="3" fill="#eee"/><path d="M1 31 H8 M1 33.5 H8 M6.5 30 L8.5 31 L6.5 32 M6.5 32.5 L8.5 33.5 L6.5 34.5" stroke="#444" stroke-width="0.7" fill="none"/><rect x="1.5" y="42" width="8" height="7" fill="#fafafa" stroke="#555" stroke-width="0.9"/><path d="M3 46 H5 M6 46 H8" stroke="#444" stroke-width="0.8"/><rect x="1.5" y="56" width="8" height="7" fill="#999" stroke="#666" stroke-width="0.6"/><path d="M2.5 61 L5 58 L8 61" stroke="#eee" stroke-width="0.6" fill="none"/></svg>
<div class="a" style="left:165.4px;top:159.6px;width:7.60px;height:7.20px;background:#e8e6fa;border:1px solid #b0b0c8;border-radius:1px"></div>
<svg class="a" style="left:164px;top:448px" width="11" height="30"><path d="M1.5 2.5 H4 L5 3.5 H9.5 V8 H1.5Z" fill="#ddd" stroke="#777" stroke-width="0.6"/><rect x="3" y="4.5" width="5" height="2.5" fill="#555"/><rect x="1.5" y="12" width="8" height="8" fill="#ccc" stroke="#999" stroke-width="0.5"/><rect x="1.5" y="12" width="3.5" height="4" fill="#333"/><path d="M6 17 H9 M2.5 18.5 H5" stroke="#666" stroke-width="0.6"/><path d="M3.5 28 L5.5 25.5 M6 28 L8 25.5" stroke="#555" stroke-width="0.7"/></svg>
<div class="a" style="left:179.6px;top:471.3px;width:18.80px;height:8.70px;background:#e6e6e6;border:1px solid #d6d6d6;border-radius:2px"></div>
<svg class="a" style="left:181px;top:472px" width="16" height="6"><rect x="1" y="3" width="4" height="3" fill="#c8c8c8"/><path d="M1.8 3 V2 A1.2 1.2 0 0 1 4.2 2 V3" stroke="#c8c8c8" stroke-width="0.7" fill="none"/><path d="M9 6 L13 1.5 L14.5 2.8 L10.5 6.5" stroke="#666" stroke-width="1" fill="none"/></svg>
<svg class="a" style="left:0;top:0" width="900" height="478" viewBox="0 0 900 478">
<defs><clipPath id="cv"><rect x="177.5" y="84.5" width="723" height="394"/></clipPath><filter id="glow" x="-20%" y="-5%" width="140%" height="110%"><feGaussianBlur stdDeviation="1.4"/></filter></defs>
<g clip-path="url(#cv)">
<rect x="303.5" y="125.3" width="159.1" height="234.3" fill="#dedcf5" stroke="#a9a9b9" stroke-width="1" rx="0"/>
<rect x="471.3" y="124.0" width="170.2" height="108.1" fill="#dedcf5" stroke="#a9a9b9" stroke-width="1" rx="0"/>
<rect x="471.1" y="239.3" width="170.6" height="155.8" fill="#dedcf5" stroke="#a9a9b9" stroke-width="1" rx="0"/>
<text x="305.9" y="131.1" font-size="5.4" fill="#555" text-anchor="start" font-family="Liberation Sans">Fernbedienungs-Eingriff überschreiben und damit abschalten</text>
<text x="305.9" y="143.5" font-size="5.4" fill="#555" text-anchor="start" font-family="Liberation Sans">Standard:</text>
<text x="305.9" y="150" font-size="5.4" fill="#555" text-anchor="start" font-family="Liberation Sans">Fernbedienungs-Eingriff aktiv,</text>
<text x="305.9" y="156.4" font-size="5.4" fill="#555" text-anchor="start" font-family="Liberation Sans">PAR_FernB_Schalter_AUS_int = 0</text>
<text x="305.9" y="168.9" font-size="5.4" fill="#555" text-anchor="start" font-family="Liberation Sans">D. h. Abschalten &gt;&gt;</text>
<text x="305.9" y="175.4" font-size="5.4" fill="#555" text-anchor="start" font-family="Liberation Sans">PAR_FernB_Schalter_AUS_int = 1</text>
<text x="473.2" y="130.1" font-size="5.4" fill="#555" text-anchor="start" font-family="Liberation Sans">Lenkwinkel</text>
<text x="473.2" y="245.3" font-size="5.4" fill="#555" text-anchor="start" font-family="Liberation Sans">Fahrpedal</text>
<text x="515.5" y="241.5" font-size="4.5" fill="#555" text-anchor="start" font-family="Liberation Sans">2</text>
<rect x="439.5" y="80" width="29.8" height="7.5" fill="#5ab4ee" stroke="#2f5f8f" stroke-width="0.8" rx="0"/>
<text x="454.4" y="93.0" font-size="4.53" fill="#222" text-anchor="middle" font-family="Liberation Sans">Look Up PWM Fernb zu Aktor, damit Lenkausschlag größer!</text>
<path d="M751.3 98.7 L776 106.8 L751.3 115Z" fill="#f8f8f8" stroke="#555" stroke-width="1"/>
<path d="M749.3 104.6 L751.3 106.8 L749.3 109" stroke="#222" stroke-width="1.2" fill="none"/>
<path d="M775.5 104.5 L777.8 106.8 L775.5 109.1 M777.3 104.5 L779.6 106.8 L777.3 109.1" stroke="#222" stroke-width="1" fill="none"/>
<text x="760.8" y="108.5" font-size="4.6" fill="#444" text-anchor="middle" font-family="Liberation Sans">1.16</text>
<text x="763.8" y="120.3" font-size="4.52" fill="#333" text-anchor="middle" font-family="Liberation Sans">AktFernb_PwmBreiteLwFernb_Erhoehung_f64</text>
<path d="M577.4 84.0 L577.4 183.2 L600.0 183.2" stroke="#404040" stroke-width="0.8" fill="none"/>
<path d="M600.0 183.2 L596.8 181.5 L596.8 184.9Z" fill="#111"/>
<path d="M408.1 160.9 L423.4 160.9" stroke="#404040" stroke-width="0.8" fill="none"/>
<path d="M423.4 160.9 L420.2 159.2 L420.2 162.6Z" fill="#111"/>
<path d="M285.8 188.6 L423.4 188.6" stroke="#404040" stroke-width="0.8" fill="none"/>
<path d="M423.4 188.6 L420.2 186.9 L420.2 190.3Z" fill="#111"/>
<path d="M285.8 210.8 L502.4 210.8" stroke="#404040" stroke-width="0.8" fill="none"/>
<path d="M502.4 210.8 L499.2 209.1 L499.2 212.5Z" fill="#111"/>
<path d="M455.7 174.7 L566.5 174.7 L566.5 197.2 L600.0 197.2" stroke="#404040" stroke-width="0.8" fill="none"/>
<path d="M600.0 197.2 L596.8 195.5 L596.8 198.9Z" fill="#111"/>
<path d="M532.6 210.8 L600.0 210.8" stroke="#404040" stroke-width="0.8" fill="none"/>
<path d="M600.0 210.8 L596.8 209.1 L596.8 212.5Z" fill="#111"/>
<path d="M632.5 197.2 L707.0 197.2 L707.0 267.2 L731.2 267.2" stroke="#404040" stroke-width="0.8" fill="none"/>
<path d="M731.2 267.2 L728.0 265.5 L728.0 268.9Z" fill="#111"/>
<path d="M707.0 203.6 L767.8 203.6" stroke="#404040" stroke-width="0.8" fill="none"/>
<path d="M767.8 203.6 L764.6 201.9 L764.6 205.3Z" fill="#111"/>
<path d="M285.8 283.3 L488.5 283.3 L488.5 305.8 L525.3 305.8" stroke="#404040" stroke-width="0.8" fill="none"/>
<path d="M525.3 305.8 L522.1 304.1 L522.1 307.5Z" fill="#111"/>
<path d="M532.0 255.7 L545.6 255.7" stroke="#404040" stroke-width="0.8" fill="none"/>
<path d="M545.6 255.7 L542.4 254.0 L542.4 257.4Z" fill="#111"/>
<path d="M566.9 255.7 L575.4 255.7" stroke="#404040" stroke-width="0.8" fill="none"/>
<path d="M575.4 255.7 L572.2 254.0 L572.2 257.4Z" fill="#111"/>
<path d="M539.6 305.9 L600.0 305.9" stroke="#404040" stroke-width="0.8" fill="none"/>
<path d="M600.0 305.9 L596.8 304.2 L596.8 307.6Z" fill="#111"/>
<path d="M410.2 310.1 L421.4 310.1" stroke="#404040" stroke-width="0.8" fill="none"/>
<path d="M421.4 310.1 L418.2 308.4 L418.2 311.8Z" fill="#111"/>
<path d="M285.8 337.7 L421.4 337.7" stroke="#404040" stroke-width="0.8" fill="none"/>
<path d="M421.4 337.7 L418.2 336.0 L418.2 339.4Z" fill="#111"/>
<path d="M453.3 324.0 L600.0 324.0" stroke="#404040" stroke-width="0.8" fill="none"/>
<path d="M600.0 324.0 L596.8 322.3 L596.8 325.7Z" fill="#111"/>
<path d="M632.4 324.0 L668.0 324.0 L668.0 220.0 L767.8 220.0" stroke="#404040" stroke-width="0.8" fill="none"/>
<path d="M767.8 220.0 L764.6 218.3 L764.6 221.7Z" fill="#111"/>
<path d="M668.0 316.9 L731.2 316.9" stroke="#404040" stroke-width="0.8" fill="none"/>
<path d="M731.2 316.9 L728.0 315.2 L728.0 318.6Z" fill="#111"/>
<path d="M285.8 371.6 L365.6 371.6" stroke="#404040" stroke-width="0.8" fill="none"/>
<path d="M365.6 371.6 L362.4 369.9 L362.4 373.3Z" fill="#111"/>
<path d="M381.8 371.6 L502.7 371.6" stroke="#404040" stroke-width="0.8" fill="none"/>
<path d="M502.7 371.6 L499.5 369.9 L499.5 373.3Z" fill="#111"/>
<path d="M532.9 371.6 L580.0 371.6 L580.0 343.1 L600.0 343.1" stroke="#404040" stroke-width="0.8" fill="none"/>
<path d="M600.0 343.1 L596.8 341.4 L596.8 344.8Z" fill="#111"/>
<path d="M285.8 400.8 L668.0 400.8 L668.0 366.8 L731.2 366.8" stroke="#404040" stroke-width="0.8" fill="none"/>
<path d="M731.2 366.8 L728.0 365.1 L728.0 368.5Z" fill="#111"/>
<path d="M285.8 416.8 L731.2 416.8" stroke="#404040" stroke-width="0.8" fill="none"/>
<path d="M731.2 416.8 L728.0 415.1 L728.0 418.5Z" fill="#111"/>
<path d="M734.1 271.8 L756.2 271.8" stroke="#222" stroke-width="0.8" fill="none"/>
<path d="M756.2 271.8 L753.0 270.1 L753.0 273.5Z" fill="#111"/>
<path d="M734.1 321.9 L756.2 321.9" stroke="#222" stroke-width="0.8" fill="none"/>
<path d="M756.2 321.9 L753.0 320.2 L753.0 323.6Z" fill="#111"/>
<path d="M734.1 371.4 L756.2 371.4" stroke="#222" stroke-width="0.8" fill="none"/>
<path d="M756.2 371.4 L753.0 369.7 L753.0 373.1Z" fill="#111"/>
<path d="M734.1 421.3 L756.2 421.3" stroke="#222" stroke-width="0.8" fill="none"/>
<path d="M756.2 421.3 L753.0 419.6 L753.0 423.0Z" fill="#111"/>
<circle cx="707" cy="203.6" r="1" fill="#111"/>
<circle cx="668" cy="316.9" r="1" fill="#111"/>
<path d="M387.8 249.3 L390.7 249.3" stroke="#4545ee" stroke-width="0.95" fill="none"/>
<path d="M390.7 249.3 L390.7 174.7 L423.4 174.7" stroke="#4545ee" stroke-width="0.95" fill="none"/>
<path d="M423.4 174.7 L420.2 173.0 L420.2 176.4Z" fill="#2020e0"/>
<path d="M390.7 249.3 L390.7 324.0 L421.4 324.0" stroke="#4545ee" stroke-width="0.95" fill="none"/>
<path d="M421.4 324.0 L418.2 322.3 L418.2 325.7Z" fill="#2020e0"/>
<circle cx="390.7" cy="249.3" r="1" fill="#4545ee"/>
<path d="M684.4 425.5 L731.2 425.5" stroke="#4545ee" stroke-width="0.95" fill="none"/>
<path d="M731.2 425.5 L728.0 423.8 L728.0 427.2Z" fill="#2020e0"/>
<path d="M706.8 425.5 L706.8 276.4 L731.2 276.4" stroke="#4545ee" stroke-width="0.95" fill="none"/>
<path d="M731.2 276.4 L728.0 274.7 L728.0 278.1Z" fill="#2020e0"/>
<path d="M706.8 326.4 L731.2 326.4" stroke="#4545ee" stroke-width="0.95" fill="none"/>
<path d="M731.2 326.4 L728.0 324.7 L728.0 328.1Z" fill="#2020e0"/>
<path d="M706.8 376.0 L731.2 376.0" stroke="#4545ee" stroke-width="0.95" fill="none"/>
<path d="M731.2 376.0 L728.0 374.3 L728.0 377.7Z" fill="#2020e0"/>
<circle cx="706.8" cy="326.4" r="1" fill="#4545ee"/>
<circle cx="706.8" cy="376" r="1" fill="#4545ee"/>
<circle cx="706.8" cy="425.5" r="1" fill="#4545ee"/>
<text x="743" y="201.8" font-size="4.4" fill="#555" text-anchor="middle" font-family="Liberation Sans">AktRtiPwm_Lw_f64</text>
<text x="714.4" y="217.8" font-size="4.4" fill="#555" text-anchor="middle" font-family="Liberation Sans">AktRtiPwm_Gas_f64</text>
<text x="564" y="215.5" font-size="4.4" fill="#555" text-anchor="middle" font-family="Liberation Sans">AktFernb_LwSoll_f64</text>
<text x="541" y="311" font-size="4.4" fill="#555" text-anchor="start" font-family="Liberation Sans">AktRtiPwm_AusgangGas_f64</text>
<text x="535" y="376.5" font-size="4.4" fill="#555" text-anchor="start" font-family="Liberation Sans">AktFernb_PwmGasSoll_f64</text>
<text x="383.5" y="376.2" font-size="4.4" fill="#555" text-anchor="start" font-family="Liberation Sans">Akt_Fahrpedal_f64_bes_f64</text>
<text x="388.3" y="288.4" font-size="4.4" fill="#555" text-anchor="middle" font-family="Liberation Sans">AktFernb_PwmBreiteGasFernb_f64</text>
<rect x="423.4" y="152.2" width="32.3" height="45.0" fill="#f6f6f6" stroke="#555" stroke-width="0.9" rx="0"/>
<path d="M423.4 159.6 L437.7 159.6 M437.7 159.6 L449.5 174.7 L455.7 174.7 M423.4 190.29999999999998 L437.7 190.29999999999998 M423.4 174.7 L428.09999999999997 174.7 M428.09999999999997 170.89999999999998 L428.09999999999997 178.5" stroke="#333" stroke-width="0.8" fill="none"/>
<circle cx="437.7" cy="159.6" r="1.3" fill="#f6f6f6" stroke="#333" stroke-width="0.7"/><circle cx="437.7" cy="190.29999999999998" r="1.3" fill="#f6f6f6" stroke="#333" stroke-width="0.7"/>
<text x="431.59999999999997" y="176.29999999999998" font-size="4.5" fill="#444" text-anchor="start" font-family="Liberation Sans">~= 0</text>
<text x="439.54999999999995" y="202.5" font-size="4.5" fill="#555" text-anchor="middle" font-family="Liberation Sans">Switch4</text>
<rect x="599.9" y="174.7" width="32.6" height="45.1" fill="#f6f6f6" stroke="#555" stroke-width="0.9" rx="0"/>
<path d="M599.9 181.5 L614.1999999999999 181.5 M614.1999999999999 181.5 L626.3 197.2 L632.5 197.2 M599.9 213.20000000000002 L614.1999999999999 213.20000000000002 M599.9 197.2 L604.6 197.2 M604.6 193.39999999999998 L604.6 201.0" stroke="#333" stroke-width="0.8" fill="none"/>
<circle cx="614.1999999999999" cy="181.5" r="1.3" fill="#f6f6f6" stroke="#333" stroke-width="0.7"/><circle cx="614.1999999999999" cy="213.20000000000002" r="1.3" fill="#f6f6f6" stroke="#333" stroke-width="0.7"/>
<text x="608.1" y="198.79999999999998" font-size="4.5" fill="#444" text-anchor="start" font-family="Liberation Sans">~= 0</text>
<text x="616.2" y="225.10000000000002" font-size="4.5" fill="#555" text-anchor="middle" font-family="Liberation Sans">Switch1</text>
<rect x="600.1" y="297.2" width="32.3" height="53.9" fill="#f6f6f6" stroke="#555" stroke-width="0.9" rx="0"/>
<path d="M600.1 305.9 L614.4 305.9 M614.4 305.9 L626.1999999999999 324 L632.4 324 M600.1 343.1 L614.4 343.1 M600.1 324 L604.8000000000001 324 M604.8000000000001 320.2 L604.8000000000001 327.8" stroke="#333" stroke-width="0.8" fill="none"/>
<circle cx="614.4" cy="305.9" r="1.3" fill="#f6f6f6" stroke="#333" stroke-width="0.7"/><circle cx="614.4" cy="343.1" r="1.3" fill="#f6f6f6" stroke="#333" stroke-width="0.7"/>
<text x="608.3000000000001" y="325.6" font-size="4.5" fill="#444" text-anchor="start" font-family="Liberation Sans">~= 0</text>
<text x="616.25" y="357.3" font-size="4.5" fill="#555" text-anchor="middle" font-family="Liberation Sans">Switch3</text>
<rect x="421.4" y="301.7" width="31.9" height="44.3" fill="#f6f6f6" stroke="#555" stroke-width="0.9" rx="0"/>
<path d="M421.4 308.8 L435.7 308.8 M435.7 308.8 L447.1 324 L453.3 324 M421.4 339.4 L435.7 339.4 M421.4 324 L426.09999999999997 324 M426.09999999999997 320.2 L426.09999999999997 327.8" stroke="#333" stroke-width="0.8" fill="none"/>
<circle cx="435.7" cy="308.8" r="1.3" fill="#f6f6f6" stroke="#333" stroke-width="0.7"/><circle cx="435.7" cy="339.4" r="1.3" fill="#f6f6f6" stroke="#333" stroke-width="0.7"/>
<text x="429.59999999999997" y="325.6" font-size="4.5" fill="#444" text-anchor="start" font-family="Liberation Sans">~= 0</text>
<text x="437.35" y="352.3" font-size="4.5" fill="#555" text-anchor="middle" font-family="Liberation Sans">Fernbedienungs-Eingriffs-bit überschreiben</text>
<rect x="394.2" y="154.4" width="13.9" height="13.9" fill="#f8f8f8" stroke="#555" stroke-width="0.9" rx="0"/>
<text x="401.15" y="162.95000000000002" font-size="4.5" fill="#555" text-anchor="middle" font-family="Liberation Sans">0</text>
<text x="401.15" y="172.9" font-size="4.5" fill="#555" text-anchor="middle" font-family="Liberation Sans">Constant1</text>
<rect x="396.4" y="303.7" width="13.8" height="13.4" fill="#f8f8f8" stroke="#555" stroke-width="0.9" rx="0"/>
<text x="403.29999999999995" y="312.0" font-size="4.5" fill="#555" text-anchor="middle" font-family="Liberation Sans">0</text>
<text x="403.29999999999995" y="323.1" font-size="4.5" fill="#555" text-anchor="middle" font-family="Liberation Sans">Constant2</text>
<rect x="672.2" y="421.4" width="12.2" height="9.2" fill="#f8f8f8" stroke="#3535d0" stroke-width="0.9" rx="0"/>
<text x="678.3" y="427.6" font-size="4.5" fill="#3535d0" text-anchor="middle" font-family="Liberation Sans">0</text>
<text x="678.3" y="435.20000000000005" font-size="4.5" fill="#3535d0" text-anchor="middle" font-family="Liberation Sans">Constant</text>
<rect x="502.5" y="196" width="30.1" height="29.3" fill="#5cb6ef" stroke="#2d4f70" stroke-width="1" rx="1"/>
<path d="M505.0 222.8 L530.1 204" stroke="#1c2c44" stroke-width="0.8"/>
<path d="M505.5 202 L505.5 222.8 L530.1 222.8" stroke="#3a7ab0" stroke-width="0.5" fill="none"/>
<text x="520.55" y="201" font-size="4.2" fill="#1a2a40" text-anchor="middle" font-family="Liberation Sans">1-D T(u)</text>
<text x="517.5" y="230.6" font-size="4.5" fill="#555" text-anchor="middle" font-family="Liberation Sans">Look Up LW zu PWM</text>
<rect x="545.6" y="243.9" width="21.3" height="24.5" fill="#5cb6ef" stroke="#2d4f70" stroke-width="1" rx="1"/>
<path d="M548.1 265.9 L564.4 251.9" stroke="#1c2c44" stroke-width="0.8"/>
<path d="M548.6 249.9 L548.6 265.9 L564.4 265.9" stroke="#3a7ab0" stroke-width="0.5" fill="none"/>
<text x="557.25" y="248.70000000000002" font-size="4.2" fill="#1a2a40" text-anchor="middle" font-family="Liberation Sans">1-D</text>
<text x="557.25" y="252.9" font-size="4.2" fill="#1a2a40" text-anchor="middle" font-family="Liberation Sans">T(u)</text>
<rect x="502.7" y="357.1" width="30.2" height="29.1" fill="#5cb6ef" stroke="#2d4f70" stroke-width="1" rx="1"/>
<path d="M505.7 363.1 L530.4 383.7" stroke="#1c2c44" stroke-width="0.8"/>
<path d="M505.7 363.1 L505.7 383.7 L530.4 383.7" stroke="#3a7ab0" stroke-width="0.5" fill="none"/>
<text x="520.8" y="362.1" font-size="4.2" fill="#1a2a40" text-anchor="middle" font-family="Liberation Sans">1-D T(u)</text>
<text x="517.5" y="391.5" font-size="4.5" fill="#555" text-anchor="middle" font-family="Liberation Sans">Look Up Fahrpedal zu PWM-Breite</text>
<rect x="523.7" y="251.7" width="8.3" height="7.5" fill="#fbfbfb" stroke="#fbfbfb" stroke-width="0.5" rx="0"/>
<path d="M524.5 255.7 L532 255.7 M525.5 257 L530.5 257 M526.5 258.2 L529.5 258.2" stroke="#888" stroke-width="0.6"/>
<rect x="575.4" y="251.7" width="8.6" height="7.5" fill="#fbfbfb" stroke="#fbfbfb" stroke-width="0.5" rx="0"/>
<path d="M576 253.5 L581 253.5 L581 258 L576 258 M578 253.5 L578 258" stroke="#888" stroke-width="0.6" fill="none"/>
<text x="569" y="261" font-size="4.4" fill="#555" text-anchor="start" font-family="Liberation Sans">AktFernb_PwmGasLookup_f64</text>
<text x="569" y="266.2" font-size="4.4" fill="#555" text-anchor="start" font-family="Liberation Sans">Terminator</text>
<text x="556.3" y="273.9" font-size="4.5" fill="#555" text-anchor="middle" font-family="Liberation Sans">Look Up Fernbedienung</text>
<text x="556.3" y="278.9" font-size="4.5" fill="#555" text-anchor="middle" font-family="Liberation Sans">Wozu ist dieser Block mit</text>
<text x="556.3" y="284.8" font-size="4.5" fill="#555" text-anchor="middle" font-family="Liberation Sans">verrechtem Mittelbereich??</text>
<rect x="525.3" y="299" width="14.3" height="14.3" fill="#5cb6ef" stroke="#2d4f70" stroke-width="0.9" rx="0"/>
<path d="M527.3 310.3 L530.7339999999999 310.3 L534.1659999999999 302 L537.6 302" stroke="#1c2c44" stroke-width="0.8" fill="none"/>
<path d="M532.45 300.5 L532.45 311.8" stroke="#3a7ab0" stroke-width="0.5"/>
<text x="500.5" y="296.6" font-size="4.5" fill="#555" text-anchor="start" font-family="Liberation Sans">Begrenzung (max. PWM-Breite)</text>
<rect x="365.6" y="362.9" width="16.2" height="17.1" fill="#5cb6ef" stroke="#2d4f70" stroke-width="0.9" rx="0"/>
<path d="M367.6 377 L371.75600000000003 377 L375.644 365.9 L379.8 365.9" stroke="#1c2c44" stroke-width="0.8" fill="none"/>
<path d="M373.70000000000005 364.4 L373.70000000000005 378.5" stroke="#3a7ab0" stroke-width="0.5"/>
<text x="374" y="383.8" font-size="4.5" fill="#555" text-anchor="middle" font-family="Liberation Sans">Begrenzung Fahrpedal</text>
<text x="374" y="389.4" font-size="4.5" fill="#555" text-anchor="middle" font-family="Liberation Sans">- gleiche Begrenzung wie in BSFLaengs -</text>
<rect x="319.1" y="242" width="68.7" height="15.0" fill="#5cb6ef" stroke="#2d5ea0" stroke-width="1" rx="0"/>
<text x="353.4" y="251.0" font-size="4.5" fill="#1a30c8" text-anchor="middle" font-family="Liberation Sans">PAR_FernB_Schalter_AUS_int</text>
<text x="356.5" y="263.2" font-size="4.5" fill="#3535d0" text-anchor="middle" font-family="Liberation Sans">Par_FernB_Schalter_AUS_int</text>
<rect x="272" y="185.0" width="13.8" height="6.8" rx="3.4" fill="#e6c640" stroke="#6a5a20" stroke-width="0.7"/>
<text x="278.9" y="189.9" font-size="4.2" fill="#333" text-anchor="middle" font-family="Liberation Sans">2</text>
<text x="279" y="197.20000000000002" font-size="4.4" fill="#555" text-anchor="middle" font-family="Liberation Sans">AktFernb_LwFernbEin_b8</text>
<rect x="272" y="207.5" width="13.8" height="6.8" rx="3.4" fill="#e6c640" stroke="#6a5a20" stroke-width="0.7"/>
<text x="278.9" y="212.4" font-size="4.2" fill="#333" text-anchor="middle" font-family="Liberation Sans">3</text>
<text x="279" y="219.70000000000002" font-size="4.4" fill="#555" text-anchor="middle" font-family="Liberation Sans">Akt_LwSoll_f64</text>
<rect x="272" y="279.9" width="13.8" height="6.8" rx="3.4" fill="#e6c640" stroke="#6a5a20" stroke-width="0.7"/>
<text x="278.9" y="284.8" font-size="4.2" fill="#333" text-anchor="middle" font-family="Liberation Sans">4</text>
<text x="279" y="292.1" font-size="4.4" fill="#555" text-anchor="middle" font-family="Liberation Sans">AktFernb_PwmBreiteGasFernb_f64</text>
<rect x="272" y="334.2" width="13.8" height="6.8" rx="3.4" fill="#e6c640" stroke="#6a5a20" stroke-width="0.7"/>
<text x="278.9" y="339.1" font-size="4.2" fill="#333" text-anchor="middle" font-family="Liberation Sans">5</text>
<text x="279" y="346.40000000000003" font-size="4.4" fill="#555" text-anchor="middle" font-family="Liberation Sans">AktFernb_GasFernbEin_b8</text>
<rect x="272" y="368.3" width="13.8" height="6.8" rx="3.4" fill="#e6c640" stroke="#6a5a20" stroke-width="0.7"/>
<text x="278.9" y="373.2" font-size="4.2" fill="#333" text-anchor="middle" font-family="Liberation Sans">6</text>
<text x="279" y="380.5" font-size="4.4" fill="#555" text-anchor="middle" font-family="Liberation Sans">Akt_Fahrpedal_f64</text>
<rect x="272" y="397.5" width="13.8" height="6.8" rx="3.4" fill="#e6c640" stroke="#6a5a20" stroke-width="0.7"/>
<text x="278.9" y="402.4" font-size="4.2" fill="#333" text-anchor="middle" font-family="Liberation Sans">7</text>
<text x="279" y="409.7" font-size="4.4" fill="#555" text-anchor="middle" font-family="Liberation Sans">AktPwm_Breite3_f64</text>
<rect x="272" y="413.4" width="13.8" height="6.8" rx="3.4" fill="#e6c640" stroke="#6a5a20" stroke-width="0.7"/>
<text x="278.9" y="418.3" font-size="4.2" fill="#333" text-anchor="middle" font-family="Liberation Sans">8</text>
<text x="279" y="425.6" font-size="4.4" fill="#555" text-anchor="middle" font-family="Liberation Sans">AktPwm_Breite4_f64</text>
<rect x="767.8" y="200.3" width="13.7" height="6.6" rx="3.3" fill="#1ec81e" stroke="#226622" stroke-width="0.7"/>
<text x="774.7" y="205.1" font-size="4.2" fill="#222" text-anchor="middle" font-family="Liberation Sans">1</text>
<text x="774.7" y="213.0" font-size="4.4" fill="#555" text-anchor="middle" font-family="Liberation Sans">AktRtiPwm_Lw_f64</text>
<rect x="767.8" y="216.7" width="13.7" height="6.6" rx="3.3" fill="#1ec81e" stroke="#226622" stroke-width="0.7"/>
<text x="774.7" y="221.5" font-size="4.2" fill="#222" text-anchor="middle" font-family="Liberation Sans">2</text>
<text x="774.7" y="229.4" font-size="4.4" fill="#555" text-anchor="middle" font-family="Liberation Sans">AktRtiPwm_Gas_f64</text>
<rect x="731.2" y="263.4" width="2.9" height="17.3" fill="#111" stroke="#111" stroke-width="0.3" rx="0"/>
<rect x="731.2" y="313.1" width="2.9" height="17.4" fill="#111" stroke="#111" stroke-width="0.3" rx="0"/>
<rect x="731.2" y="362.9" width="2.9" height="17.3" fill="#111" stroke="#111" stroke-width="0.3" rx="0"/>
<rect x="731.2" y="412.4" width="2.9" height="17.7" fill="#111" stroke="#111" stroke-width="0.3" rx="0"/>
<rect x="756.2" y="246.5" width="39.2" height="199.9" fill="none" stroke="#ff5050" stroke-width="3.6" filter="url(#glow)" opacity="0.85"/>
<rect x="756.2" y="246.5" width="39.2" height="199.9" fill="#f5f5f5" stroke="#e03030" stroke-width="0.7" stroke-dasharray="1 0.6"/>
<text x="775.5" y="345.5" font-size="4.5" fill="#3535d0" text-anchor="middle" font-family="Liberation Sans">dSPACE RTI1104</text>
<text x="775.5" y="351.6" font-size="4.5" fill="#3535d0" text-anchor="middle" font-family="Liberation Sans">not installed</text>
<text x="775.7" y="452" font-size="4.5" fill="#3535d0" text-anchor="middle" font-family="Liberation Sans">DS1104SL_DSP_PWM</text>
<text x="775.7" y="457.6" font-size="4.53" fill="#3535d0" text-anchor="middle" font-family="Liberation Sans">ST2PWM, SPWM7, SPWM8, SPWM9</text>
<rect x="496.4" y="290.3" width="77.9" height="40.4" fill="none" stroke="#7030a0" stroke-width="4" rx="1.5"/>
<rect x="330.4" y="357.6" width="94.7" height="44.8" fill="none" stroke="#7030a0" stroke-width="4" rx="1.5"/>
<rect x="478" y="349.8" width="83.8" height="54.9" fill="none" stroke="#0f3ed6" stroke-width="4" rx="1.5"/>
<rect x="369" y="259.5" width="168.9" height="27.0" fill="#dcc1ea" stroke="none" stroke-width="0" rx="0"/>
<text x="374.7" y="271.5" font-size="9.44" fill="#1a1a1a" text-anchor="start" font-family="Liberation Serif" stroke="#1a1a1a" stroke-width="0.3">PAR_SenFernb_MaxGasPWMBreite_f64</text>
<text x="374.7" y="282.5" font-size="9.44" fill="#1a1a1a" text-anchor="start" font-family="Liberation Serif" stroke="#1a1a1a" stroke-width="0.3">PAR_SenFernb_MinGasPWMBreite_f64</text>
<rect x="290.7" y="407.5" width="168.6" height="28.2" fill="#dcc1ea" stroke="none" stroke-width="0" rx="0"/>
<text x="296.7" y="419.6" font-size="9.36" fill="#1a1a1a" text-anchor="start" font-family="Liberation Serif" stroke="#1a1a1a" stroke-width="0.3">PAR_BsfLaengs_FahrpedalSoll_Max_f64</text>
<text x="296.7" y="430.5" font-size="9.36" fill="#1a1a1a" text-anchor="start" font-family="Liberation Serif" stroke="#1a1a1a" stroke-width="0.3">PAR_BsfLaengs_FahrpedalSoll_Min_f64</text>
<rect x="490" y="408.4" width="136.7" height="16.7" fill="#a6bdf5" stroke="none" stroke-width="0" rx="0"/>
<text x="492.7" y="420" font-size="9.32" fill="#1a1a1a" text-anchor="start" font-family="Liberation Serif" stroke="#1a1a1a" stroke-width="0.3">PAR_LookUpPWMSignalGas_f64</text>
</g></svg>
</body></html>
